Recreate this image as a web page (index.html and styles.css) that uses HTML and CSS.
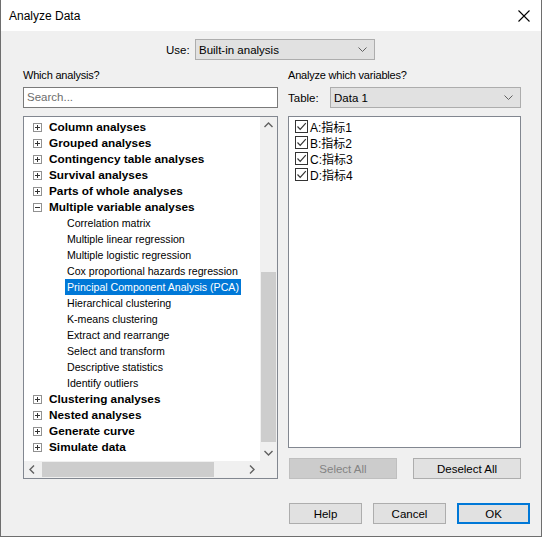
FILE: index.html
```html
<!DOCTYPE html>
<html>
<head>
<meta charset="utf-8">
<link rel="stylesheet" href="styles.css">
</head>
<body>
<div class="window">
  <div class="titlebar">
    <span class="title">Analyze Data</span>
    <svg class="close" width="12" height="12" viewBox="0 0 12 12"><path d="M0.5 0.5 L11.5 11.5 M11.5 0.5 L0.5 11.5" stroke="#000" stroke-width="1.1" fill="none"/></svg>
  </div>
  <div class="content">
    <div class="use-row">
      <span class="use-label">Use:</span>
      <div class="combo use-combo"><span>Built-in analysis</span><svg class="chev" width="9" height="5" viewBox="0 0 9 5"><path d="M0.5 0.5 L4.5 4.5 L8.5 0.5" stroke="#606060" fill="none"/></svg></div>
    </div>
    <div class="columns">
      <div class="left">
        <div class="label">Which analysis?</div>
        <div class="search">Search...</div>
        <div class="tree">
          <div class="tree-body">
            <div class="tree-rows">
              <div class="row top"><span class="pm plus"></span>Column analyses</div>
              <div class="row top"><span class="pm plus"></span>Grouped analyses</div>
              <div class="row top"><span class="pm plus"></span>Contingency table analyses</div>
              <div class="row top"><span class="pm plus"></span>Survival analyses</div>
              <div class="row top"><span class="pm plus"></span>Parts of whole analyses</div>
              <div class="row top"><span class="pm minus"></span>Multiple variable analyses</div>
              <div class="row child"><span>Correlation matrix</span></div>
              <div class="row child"><span>Multiple linear regression</span></div>
              <div class="row child"><span>Multiple logistic regression</span></div>
              <div class="row child"><span>Cox proportional hazards regression</span></div>
              <div class="row child"><span class="sel">Principal Component Analysis (PCA)</span></div>
              <div class="row child"><span>Hierarchical clustering</span></div>
              <div class="row child"><span>K-means clustering</span></div>
              <div class="row child"><span>Extract and rearrange</span></div>
              <div class="row child"><span>Select and transform</span></div>
              <div class="row child"><span>Descriptive statistics</span></div>
              <div class="row child"><span>Identify outliers</span></div>
              <div class="row top"><span class="pm plus"></span>Clustering analyses</div>
              <div class="row top"><span class="pm plus"></span>Nested analyses</div>
              <div class="row top"><span class="pm plus"></span>Generate curve</div>
              <div class="row top"><span class="pm plus"></span>Simulate data</div>
            </div>
            <div class="vscroll">
              <svg class="arrow" width="17" height="17" viewBox="0 0 17 17"><path d="M4.5 10 L8.5 6 L12.5 10" stroke="#606060" stroke-width="1.4" fill="none"/></svg>
              <div class="vtrack"><div class="vthumb"></div></div>
              <svg class="arrow" width="17" height="17" viewBox="0 0 17 17"><path d="M4.5 7 L8.5 11 L12.5 7" stroke="#606060" stroke-width="1.4" fill="none"/></svg>
            </div>
          </div>
          <div class="hscroll">
            <svg class="arrow" width="17" height="17" viewBox="0 0 17 17"><path d="M10 4.5 L6 8.5 L10 12.5" stroke="#606060" stroke-width="1.4" fill="none"/></svg>
            <div class="htrack"><div class="hthumb"></div></div>
            <svg class="arrow" width="17" height="17" viewBox="0 0 17 17"><path d="M7 4.5 L11 8.5 L7 12.5" stroke="#606060" stroke-width="1.4" fill="none"/></svg>
            <div class="corner"></div>
          </div>
        </div>
      </div>
      <div class="right">
        <div class="label">Analyze which variables?</div>
        <div class="table-row">
          <span class="table-label">Table:</span>
          <div class="combo table-combo"><span>Data 1</span><svg class="chev" width="9" height="5" viewBox="0 0 9 5"><path d="M0.5 0.5 L4.5 4.5 L8.5 0.5" stroke="#606060" fill="none"/></svg></div>
        </div>
        <div class="varlist">
          <div class="var"><span class="cb"><svg width="11" height="11" viewBox="0 0 11 11"><path d="M1.5 5.5 L4.2 8.3 L9.8 2.2" stroke="#333" stroke-width="1.2" fill="none"/></svg></span>A:指标1</div>
          <div class="var"><span class="cb"><svg width="11" height="11" viewBox="0 0 11 11"><path d="M1.5 5.5 L4.2 8.3 L9.8 2.2" stroke="#333" stroke-width="1.2" fill="none"/></svg></span>B:指标2</div>
          <div class="var"><span class="cb"><svg width="11" height="11" viewBox="0 0 11 11"><path d="M1.5 5.5 L4.2 8.3 L9.8 2.2" stroke="#333" stroke-width="1.2" fill="none"/></svg></span>C:指标3</div>
          <div class="var"><span class="cb"><svg width="11" height="11" viewBox="0 0 11 11"><path d="M1.5 5.5 L4.2 8.3 L9.8 2.2" stroke="#333" stroke-width="1.2" fill="none"/></svg></span>D:指标4</div>
        </div>
        <div class="sel-buttons">
          <div class="btn disabled wide">Select All</div>
          <div class="btn wide">Deselect All</div>
        </div>
      </div>
    </div>
    <div class="footer">
      <div class="btn">Help</div>
      <div class="btn">Cancel</div>
      <div class="btn default">OK</div>
    </div>
  </div>
</div>
</body>
</html>
```

FILE: styles.css
```css
* { box-sizing: border-box; }
html, body { margin: 0; padding: 0; }
body {
  width: 542px;
  height: 537px;
  overflow: hidden;
  font-family: "Liberation Sans", Arial, "Noto Sans CJK SC", sans-serif;
  font-size: 11.5px;
  color: #000;
}
.window {
  width: 542px;
  height: 537px;
  background: #f0f0f0;
  border: 1px solid #6e6e6e;
  border-top: none;
  display: flex;
  flex-direction: column;
}
.titlebar {
  height: 31px;
  background: #fff;
  display: flex;
  align-items: center;
  justify-content: space-between;
  padding: 0 11px 0 8px;
  flex: none;
}
.title { font-size: 12px; }
.content {
  flex: 1;
  display: flex;
  flex-direction: column;
}
.use-row {
  margin-top: 8px;
  display: flex;
  align-items: center;
  padding-left: 165px;
  height: 21px;
}
.use-label { width: 29px; }
.combo {
  height: 21px;
  background: #e1e1e1;
  border: 1px solid #adadad;
  display: flex;
  align-items: center;
  justify-content: space-between;
  padding: 0 7px 0 3px;
}
.use-combo { width: 180px; }
.columns {
  display: flex;
  padding-left: 22px;
  gap: 10px;
  margin-top: 8px;
}
.left { width: 255px; display: flex; flex-direction: column; }
.right { width: 233px; display: flex; flex-direction: column; }
.label { height: 19px; line-height: 15px; font-size: 11px; letter-spacing: -0.2px; }
.search {
  height: 21px;
  background: #fff;
  border: 1px solid #7a7a7a;
  padding: 2px 0 0 3px;
  color: #6d6d6d;
  line-height: 15px;
}
.tree {
  margin-top: 8px;
  height: 363px;
  border: 1px solid #828790;
  background: #fff;
  display: flex;
  flex-direction: column;
}
.tree-body { flex: 1; display: flex; min-height: 0; }
.tree-rows {
  flex: 1;
  padding-top: 2px;
  font-family: "Liberation Sans", Arial, sans-serif;
  font-size: 10.6px;
  overflow: hidden;
}
.row {
  height: 16px;
  display: flex;
  align-items: center;
  white-space: nowrap;
}
.row.top { font-weight: bold; padding-left: 9px; font-size: 11.8px; }
.row.child { padding-left: 41px; }
.row.child span { padding: 0 2px; line-height: 16px; }
.row.child .sel { background: #0078d7; color: #fff; }
.pm {
  width: 9px;
  height: 9px;
  border: 1px solid #919191;
  margin-right: 7px;
  position: relative;
  background: #fff;
  flex: none;
}
.pm::before {
  content: "";
  position: absolute;
  left: 1px; top: 3px;
  width: 5px; height: 1px;
  background: #333;
}
.pm.plus::after {
  content: "";
  position: absolute;
  left: 3px; top: 1px;
  width: 1px; height: 5px;
  background: #333;
}
.vscroll {
  width: 17px;
  background: #f0f0f0;
  display: flex;
  flex-direction: column;
}
.arrow { display: block; flex: none; }
.vtrack { flex: 1; display: flex; flex-direction: column; padding-top: 138px; }
.vthumb { height: 170px; margin: 0 1px; background: #cdcdcd; }
.hscroll {
  height: 17px;
  background: #f0f0f0;
  display: flex;
  flex: none;
}
.htrack { flex: 1; padding: 1px 0 1px 1px; display: flex; }
.hthumb { width: 172px; background: #cdcdcd; }
.corner { width: 17px; background: #f0f0f0; }
.table-row { display: flex; align-items: center; height: 21px; }
.table-label { width: 42px; }
.table-combo { width: 191px; }
.varlist {
  margin-top: 8px;
  height: 332px;
  background: #fff;
  border: 1px solid #828790;
  padding: 1px 0 0 6px;
  font-family: "Liberation Sans", "Noto Sans CJK SC", sans-serif;
  font-size: 12px;
}
.var { height: 16px; display: flex; align-items: center; }
.cb {
  width: 13px;
  height: 13px;
  border: 1px solid #333;
  background: #fff;
  margin-right: 2px;
  display: flex;
  align-items: center;
  justify-content: center;
}
.cb svg { display: block; }
.sel-buttons {
  margin-top: 10px;
  display: flex;
  justify-content: space-between;
  padding-left: 1px;
}
.btn {
  width: 73px;
  height: 21px;
  background: #e1e1e1;
  border: 1px solid #adadad;
  display: flex;
  align-items: center;
  justify-content: center;
}
.btn.wide { width: 108px; }
.btn.disabled { background: #cccccc; border-color: #bfbfbf; color: #838383; }
.btn.default { border: 2px solid #0078d7; }
.footer {
  margin-top: 24px;
  display: flex;
  gap: 11px;
  padding-left: 288px;
}
```
